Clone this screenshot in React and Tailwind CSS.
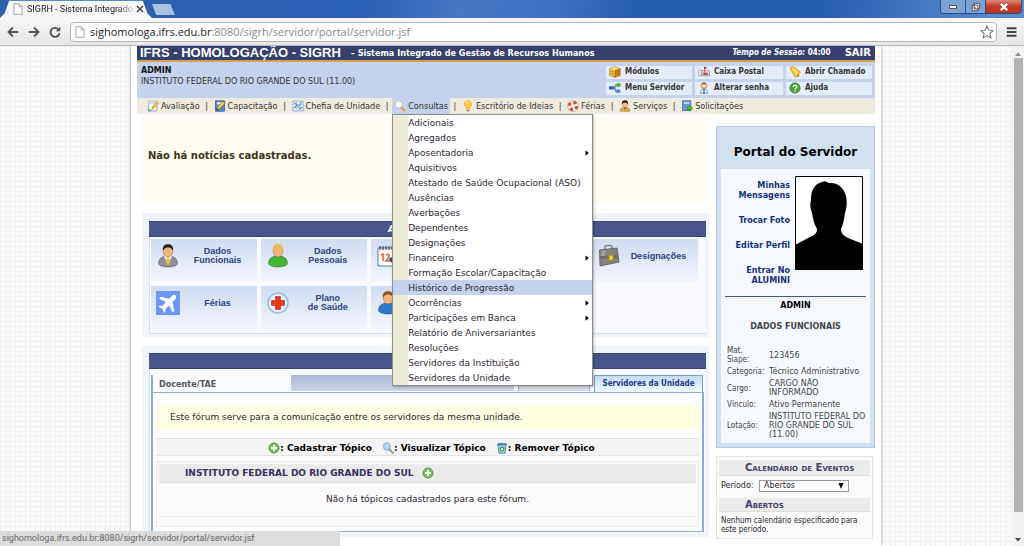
import React from "react";

const Svg = ({ className = "size-3 shrink-0", box = "0 0 16 16", children }) => (
  <svg className={className} viewBox={box} fill="none" aria-hidden="true">
    {children}
  </svg>
);

const NoteIcon = () => (
  <Svg>
    <path d="M2 1.500h11v13H2z" fill="#fff" stroke="#7d97b5" />
    <path d="M2 1.500h11v4H2z" fill="#cfe0f3" />
    <path d="M1.500 11l5 4h-5z" fill="#5b8fd0" />
    <path d="M6 13l1-4 6-7 2.500 2-6 7z" fill="#f3c24b" stroke="#b98a1f" strokeWidth=".7" />
  </Svg>
);
const BookPencilIcon = () => (
  <Svg>
    <path d="M2 1h12v14H2z" fill="#5c86c9" stroke="#2e5596" />
    <path d="M4 3h8v3H4z" fill="#dfe9f8" />
    <path d="M4 13l1-4 7-7 3 2-7 7z" fill="#f5cf4e" stroke="#8a6a16" strokeWidth=".8" />
    <path d="M3 14l1-3 2 2z" fill="#333" />
  </Svg>
);
const ChartIcon = () => (
  <Svg>
    <path d="M1 1.500h14v13H1z" fill="#e3f0f8" stroke="#7fa5c2" />
    <path d="M1 6h14M1 10h14M6 2v12M11 2v12" stroke="#a9c7dc" />
    <path d="M3 11l3-4 2 2 5-6M3 4l4 2M9 12l4-2" stroke="#3f7396" strokeWidth="1.300" />
  </Svg>
);
const SearchIcon = ({ blue }) => (
  <Svg>
    <circle cx="6.500" cy="6" r="4.800" fill={blue ? "#b5d2f3" : "#fff"} stroke={blue ? "#9cb6d8" : "#c3c3c3"} strokeWidth="1.500" />
    <path d="M10 10l4.500 4.500" stroke={blue ? "#999" : "#e39a2f"} strokeWidth="2.500" strokeLinecap="round" />
  </Svg>
);
const BulbIcon = () => (
  <Svg>
    <path d="M8 .8a4.800 4.800 0 0 0-3 8.600c.8.700 1 1.600 1 2.600h4c0-1 .2-1.900 1-2.600A4.800 4.800 0 0 0 8 .8z" fill="#ffc83d" stroke="#e89d1c" strokeWidth=".8" />
    <path d="M6 13h4v2H6z" fill="#7e8790" />
    <path d="M6 4l2-2" stroke="#fff4c2" strokeWidth="1.500" />
  </Svg>
);
const BuoyIcon = () => (
  <Svg>
    <circle cx="8" cy="8" r="5" stroke="#f4f0ee" strokeWidth="4" />
    <circle cx="8" cy="8" r="5" stroke="#d5492c" strokeWidth="4" strokeDasharray="4 3.850" />
    <circle cx="8" cy="8" r="7.200" stroke="#a86a5a" strokeWidth=".5" />
  </Svg>
);
const UserIcon = () => (
  <Svg>
    <path d="M1.500 15c0-4 2.500-5.500 6.500-5.500s6.500 1.500 6.500 5.500z" fill="#e2b23a" stroke="#0006" strokeWidth=".8" />
    <path d="M6 10l2 3 2-3z" fill="#c5332a" />
    <circle cx="8" cy="5.500" r="3.700" fill="#f6c58f" stroke="#a66c33" strokeWidth=".4" />
    <path d="M3.800 6C3.300 2 5.500.3 8 .3s4.700 1.700 4.200 5.700C11 4 9.500 3.800 8 3.800S5 4 3.800 6z" fill="#2c1a10" />
  </Svg>
);
const SolicitIcon = () => (
  <Svg>
    <path d="M2 1h11v13H2z" fill="#6f9bd3" stroke="#315e9e" />
    <path d="M4 3h7v2H4z" fill="#d6e5f7" />
    <path d="M8 9h4V7l4 4-4 4v-2H8z" fill="#4db43c" stroke="#237a17" strokeWidth=".6" />
  </Svg>
);
const CubeIcon = () => (
  <Svg>
    <path d="M1 3.500L8 1l7 2.500v9L8 15l-7-2.500z" fill="#c9871f" stroke="#8f5a10" strokeWidth=".8" />
    <path d="M1 3.500L8 6v9l-7-2.500z" fill="#f2bf3c" />
    <path d="M1 3.500L8 1l7 2.500L8 6z" fill="#f9dd7d" />
    <path d="M8 6l7-2.500M3 7l3 1M3 10l3 1M10 8l3-1M10 11l3-1M8 6v9" stroke="#8f5a10" strokeWidth=".8" />
  </Svg>
);
const TreeIcon = () => (
  <Svg>
    <path d="M5 8h4M8 4v8M8 4h3M8 12h3" stroke="#555" />
    <rect x="0" y="5.500" width="7" height="4.500" rx="1" fill="#2f68c5" />
    <ellipse cx="12.500" cy="4" rx="3.500" ry="2.800" fill="#4fb845" />
    <ellipse cx="12" cy="12" rx="3.500" ry="2.500" fill="#4a86dc" />
  </Svg>
);
const MailboxIcon = () => (
  <Svg>
    <path d="M1 7c0-3 4-3 4 0v6H1z" fill="#eee" stroke="#777" strokeWidth=".8" />
    <path d="M5 6h8c2 0 2.500 1 2.500 3v4H5z" fill="#d8d8dd" stroke="#777" strokeWidth=".8" />
    <path d="M8 1h3v3h-2v5H8z" fill="#d2342b" />
    <path d="M7 9h6v3H7z" fill="#c3483d" />
  </Svg>
);
const PersonKeyIcon = () => (
  <Svg>
    <circle cx="8" cy="5" r="3.800" fill="#fbd9a8" stroke="#b56a2a" />
    <path d="M4.500 3c1-3 6-3 7 0z" fill="#b5531b" />
    <path d="M3.500 15c0-3.500 1.500-5.500 4.500-5.500s4.500 2 4.500 5.500z" fill="#fff" stroke="#4169ad" />
    <path d="M8 10v5" stroke="#3765b5" strokeWidth="2" />
  </Svg>
);
const BellIcon = () => (
  <Svg>
    <path d="M2 2l3-1c5 1 6 5 9 6l1 2-6 6-2-1C7 9 2 8 2 2z" fill="#f8cb37" stroke="#b7820c" strokeWidth=".8" />
    <path d="M5 4c3 1 4 4 6 6" stroke="#fff1a6" strokeWidth="1.500" />
    <circle cx="12" cy="13" r="1.500" fill="#bd8415" />
  </Svg>
);
const HelpIcon = () => (
  <Svg>
    <circle cx="8" cy="8" r="6.800" fill="#44a838" stroke="#2a7a22" />
    <path d="M5.800 6.500c0-3 4.600-3 4.600-.3C10.400 8 8 8 8 10" stroke="#fff" strokeWidth="1.700" />
    <circle cx="8" cy="12" r="1.100" fill="#fff" />
  </Svg>
);
const AddIcon = () => (
  <Svg>
    <circle cx="8" cy="8" r="6.800" fill="#79bd5d" stroke="#4c8e35" />
    <path d="M8 4v8M4 8h8" stroke="#fff" strokeWidth="2.400" />
  </Svg>
);
const BinIcon = () => (
  <Svg>
    <path d="M2.500 3h11L12 15H4z" fill="#a8cdec" stroke="#4378ad" />
    <path d="M1 3l3-2 11 1-1 2.500H2z" fill="#4f83c0" />
    <circle cx="8" cy="9.500" r="2.500" fill="#eaf7e6" stroke="#35a02b" strokeWidth="1.600" />
  </Svg>
);
const PageIcon = () => (
  <Svg>
    <path d="M2.500 1h7l4 4v10h-11z" fill="#fff" stroke="#8a8a8a" />
    <path d="M9.500 1v4h4" stroke="#8a8a8a" />
  </Svg>
);

const BigUser = ({ hair, body, tie }) => (
  <Svg className="size-6 shrink-0" box="0 0 24 24">
    <path d="M2.500 20c0-5.500 3-8 9.500-8s9.500 2.500 9.500 8c-2 4-17 4-19 0z" fill={body} stroke="#0006" strokeWidth=".7" />
    {tie && <path d="M8 12l4 8 4-8z" fill="#fff" />}
    {tie && <path d="M11 13h2l1 5-2 4-2-4z" fill="#e0c23a" />}
    <ellipse cx="12" cy="7" rx="4.800" ry="6" fill="#f0b87c" stroke="#9b6430" strokeWidth=".5" />
    <path d="M7 7C6 2 9 .3 12 .3S18 2 17 7c-1-3-3-3.500-5-3.500S8 4 7 7z" fill={hair} />
  </Svg>
);
const PlaneIcon = () => (
  <Svg className="size-6 shrink-0" box="0 0 24 24">
    <path d="M0 0h24v24H0z" fill="#6a97f3" />
    <path d="M19.500 4.200c-1-.8-2.500-.2-3.500.8l-2.800 2.800-8.500-2L3 7.500l7 3.600-3.600 3.800-2.600-.4L2.500 16l4 1.700L8.200 22l1.400-1.400-.3-2.700 3.800-3.500 3.500 7 1.800-1.700-2-8.500L19 8.400c1-1 1.500-3.200.5-4.200z" fill="#fff" />
  </Svg>
);
const CrossIcon = () => (
  <Svg className="size-6 shrink-0" box="0 0 24 24">
    <circle cx="12" cy="12" r="10" fill="#e4f1fb" stroke="#8bbde6" strokeWidth="1.500" />
    <path d="M9.500 5.500h5v4h4v5h-4v4h-5v-4h-4v-5h4z" fill="#e8381b" stroke="#b52611" strokeWidth=".6" />
  </Svg>
);
const CalendarIcon = () => (
  <Svg className="size-6 shrink-0" box="0 0 24 24">
    <path d="M2 4h20v18H2z" fill="#fff" stroke="#5775b0" />
    <path d="M4 2v4M7 2v4M10 2v4M13 2v4M16 2v4M19 2v4" stroke="#444" strokeWidth="1.200" />
    <path d="M5 11l2-1v7M10 11c3-2 4 1 2 3l-2 3h5" stroke="#e0662b" strokeWidth="1.600" />
    <path d="M14 14l6 8" stroke="#27478f" strokeWidth="3" />
  </Svg>
);
const CaseIcon = () => (
  <Svg className="size-6 shrink-0" box="0 0 24 24">
    <path d="M8 5V2.500c0-1 7-2 7 0V5" stroke="#777" strokeWidth="1.300" />
    <path d="M2.500 6L20 4l2 14-19 4z" fill="#85827f" stroke="#5b5855" strokeWidth=".8" />
    <path d="M2.500 12L21 11v3L3 15z" fill="#716d6a" />
    <path d="M4 7l5-.7L8 12H4z" fill="#a19e9b" />
    <path d="M12 11.500h4v4.500h-4z" fill="#f4d622" stroke="#b89a10" strokeWidth=".6" />
  </Svg>
);

const NAV = [
  ["Avaliação", NoteIcon],
  ["Capacitação", BookPencilIcon],
  ["Chefia de Unidade", ChartIcon],
  ["Consultas", SearchIcon],
  ["Escritório de Ideias", BulbIcon],
  ["Férias", BuoyIcon],
  ["Serviços", UserIcon],
  ["Solicitações", SolicitIcon],
];
const MENU = [
  "Adicionais", "Agregados", "Aposentadoria", "Aquisitivos", "Atestado de Saúde Ocupacional (ASO)",
  "Ausências", "Averbações", "Dependentes", "Designações", "Financeiro", "Formação Escolar/Capacitação",
  "Histórico de Progressão", "Ocorrências", "Participações em Banca", "Relatório de Aniversariantes",
  "Resoluções", "Servidores da Instituição", "Servidores da Unidade",
];
const SUBMENUS = ["Aposentadoria", "Financeiro", "Ocorrências", "Participações em Banca"];
const SHORTCUTS = [
  ["Módulos", CubeIcon],
  ["Caixa Postal", MailboxIcon],
  ["Abrir Chamado", BellIcon],
  ["Menu Servidor", TreeIcon],
  ["Alterar senha", PersonKeyIcon],
  ["Ajuda", HelpIcon],
];
const TILES = [
  [["Dados", "Funcionais"], <BigUser hair="#262626" body="#8d8f92" tie />],
  [["Dados", "Pessoais"], <BigUser hair="#e5b843" body="#43b535" />],
  [[], <CalendarIcon />],
  [[], null],
  [["Designações"], <CaseIcon />],
  [["Férias"], <PlaneIcon />],
  [["Plano", "de Saúde"], <CrossIcon />],
  [[], <BigUser hair="#8c5420" body="#2b78c9" />],
];
const DATA = [
  [<>Mat.<br />Siape:</>, "123456"],
  ["Categoria:", "Técnico Administrativo"],
  ["Cargo:", "CARGO NÃO INFORMADO"],
  ["Vínculo:", "Ativo Permanente"],
  ["Lotação:", "INSTITUTO FEDERAL DO RIO GRANDE DO SUL (11.00)"],
];

function Browser() {
  return (
    <header className="shrink-0 font-['Open_Sans',sans-serif]">
      <div className="flex h-[18px] items-start justify-between bg-[linear-gradient(100deg,#2e62ad_0%,#2a60b0_35%,#4677c2_45%,#3c70bf_55%,#265dab_62%,#265dab_80%,#4a7fc4_92%,#5d8ccb_100%)]">
        <div className="flex h-full items-start">
          <div className="flex h-full w-[152px] items-center gap-[3px] bg-[#f5f6f7] pl-3 pr-2.5 font-['Roboto',sans-serif] text-[9px] text-[#222] [clip-path:polygon(0_100%,3%_75%,6%_4%,94%_4%,97%_75%,100%_100%)]">
            <PageIcon />
            <span className="flex-1 whitespace-nowrap [mask-image:linear-gradient(90deg,#000_85%,#0003)]">SIGRH - Sistema Integrado</span>
            <button aria-label="Fechar aba">
              <Svg className="size-2"><path d="M2 2l12 12M14 2L2 14" stroke="#444" strokeWidth="3" /></Svg>
            </button>
          </div>
          <button aria-label="Nova aba" className="mt-1 h-[11px] w-[23px] bg-[#a6c2e4] [clip-path:polygon(0_0,80%_0,100%_100%,18%_100%)]" />
        </div>
        <div className="mr-0.5 flex h-3.5 overflow-hidden rounded-b border border-t-0 border-[#294c82]">
          <button aria-label="Minimizar" className="flex w-[25px] items-end justify-center border-r border-[#294c82] bg-[#7da3d6] pb-1">
            <span className="h-1 w-2 border border-[#555] bg-white" />
          </button>
          <button aria-label="Restaurar" className="flex w-5 items-center justify-center border-r border-[#294c82] bg-[#7da3d6]">
            <Svg className="size-2.5"><path d="M5 2h9v9H5zM2 5h9v9H2z" fill="#fff" stroke="#444" strokeWidth="1.500" /><path d="M5.500 8.500h2v2h-2z" fill="#444" /></Svg>
          </button>
          <button aria-label="Fechar" className="flex w-[35px] items-center justify-center bg-[linear-gradient(#df8a79,#c33a26_50%,#bb3420)]">
            <Svg className="size-2.5"><path d="M3 3l10 10M13 3L3 13" stroke="#fff" strokeWidth="3.500" /></Svg>
          </button>
        </div>
      </div>
      <div className="flex h-7 items-center gap-[9px] border-b border-[#b9b9b9] bg-[linear-gradient(#f7f7f8,#e6e6e7)] pr-1.5 pl-[7px]">
        <button aria-label="Voltar"><Svg className="size-3"><path d="M15 8H2M8 2L2 8l6 6" stroke="#555" strokeWidth="2.500" /></Svg></button>
        <button aria-label="Avançar"><Svg className="size-3"><path d="M1 8h13M8 2l6 6-6 6" stroke="#555" strokeWidth="2.500" /></Svg></button>
        <button aria-label="Recarregar"><Svg className="size-3"><path d="M13 5A6 6 0 1 0 14 9.500" stroke="#555" strokeWidth="2.500" /><path d="M15 1v6H9z" fill="#555" /></Svg></button>
        <div className="flex h-5 flex-1 items-center gap-1 rounded-sm border border-[#b4b4b4] bg-white pr-0.5 pl-[3px]">
          <PageIcon />
          <a href="#endereco" className="flex-1 text-[11px] text-[#8a8a8a]"><span className="text-[#222]">sighomologa.ifrs.edu.br</span>:8080/sigrh/servidor/portal/servidor.jsf</a>
          <button aria-label="Favorito"><Svg className="size-3.5"><path d="M8 1.200l2 4.800 5 .4-3.800 3.300 1.200 5L8 12l-4.400 2.700 1.200-5L1 6.400 6 6z" stroke="#777" strokeWidth="1.200" /></Svg></button>
        </div>
        <button aria-label="Menu"><Svg className="size-3"><path d="M1 3h13M1 8h13M1 13h13" stroke="#444" strokeWidth="2.600" /></Svg></button>
      </div>
    </header>
  );
}

function ConsultasMenu() {
  return (
    <ul className="absolute top-full left-0 z-20 w-[201px] border border-[#8d8f85] bg-[linear-gradient(90deg,#ecebd8_15px,#fff_15px)] font-['DejaVu_Sans',sans-serif] text-[#2b2530] shadow-[1px_1px_2px_#0004]">
      {MENU.map((m) => (
        <li key={m}>
          <a href="#consultas" className={`flex h-[15px] items-center justify-between pl-[15px] pr-0.5 whitespace-nowrap ${m === "Histórico de Progressão" ? "bg-[#c4d2eb]" : ""}`}>
            {m}
            {SUBMENUS.includes(m) && <Svg className="size-1.5"><path d="M4 1l9 7-9 7z" fill="#000" /></Svg>}
          </a>
        </li>
      ))}
    </ul>
  );
}

function TopArea() {
  return (
    <div className="mx-[6px] font-['DejaVu_Sans_Condensed','DejaVu_Sans',sans-serif]">
      <div className="flex h-4 items-center border-b-2 border-[#d9a04a] bg-[#373f6e] pl-[3px] pr-1 text-white">
        <h1 className="font-['Liberation_Sans',sans-serif] text-[13px] font-bold whitespace-nowrap">IFRS - HOMOLOGAÇÃO - SIGRH</h1>
        <span className="ml-2.5 flex-1 text-[9px] font-bold whitespace-nowrap">– Sistema Integrado de Gestão de Recursos Humanos</span>
        <span className="mr-3.5 text-[8px] font-bold whitespace-nowrap"><i>Tempo de Sessão:</i> 04:00</span>
        <a href="#sair" className="font-['DejaVu_Sans',sans-serif] text-[10px] font-bold">SAIR</a>
      </div>
      <div className="flex h-9 justify-between bg-[#c4d2eb] pl-1 pr-[3px]">
        <div className="pt-[3px] font-['DejaVu_Sans',sans-serif] text-[8px] leading-[11px] text-[#333]">
          <p className="font-bold text-[#111]">ADMIN</p>
          <p>INSTITUTO FEDERAL DO RIO GRANDE DO SUL (11.00)</p>
        </div>
        <div className="grid grid-cols-[86px_88px_86px] content-center gap-x-[3px] gap-y-[3px]">
          {SHORTCUTS.map(([t, I]) => (
            <a key={t} href="#atalho" className="flex h-[13px] items-center gap-1 bg-[#e5ebf7] pl-[3px] text-[8px] font-bold whitespace-nowrap text-[#333]"><I />{t}</a>
          ))}
        </div>
      </div>
      <nav className="flex h-4 items-stretch bg-[#efebde] pl-2 whitespace-nowrap text-[#333]">
        {NAV.map(([t, I], i) => (
          <div key={t} className="flex items-center">
            {i > 0 && <span className="w-2.5 text-center">|</span>}
            <div className={`relative flex h-full items-center ${t === "Consultas" ? "bg-[#c4d2eb]" : ""}`}>
              <a href="#menu" className="flex items-center gap-0.5 px-0.5"><I />{t}</a>
              {t === "Consultas" && <ConsultasMenu />}
            </div>
          </div>
        ))}
      </nav>
    </div>
  );
}

const barClass = "h-4 border-y border-[#39447a] bg-[#47558a] text-[9px] leading-[14px] font-bold text-white italic";

function Modules() {
  return (
    <section className="bg-[#eff3fa] px-[3px] pt-2 pb-[3px] pl-[7px]">
      <h2 className={`${barClass} pl-[239px]`}>A</h2>
      <div className="grid grid-cols-5 gap-1 border-b border-l border-[#d3deef] bg-[#f8faff] pt-0.5 pr-2 pb-1 pl-px">
        {TILES.map(([lines, icon], i) => (
          <a key={i} href="#modulo" aria-label={lines.join(" ") || "Módulo"} className="flex h-[43px] items-start bg-[linear-gradient(#cfdbf0,#f3f6fd)] pt-[5px] pl-[5px] font-['Liberation_Sans',sans-serif] text-[9px] leading-[9px] font-bold text-[#2b4384]">
            {icon}
            <span className="flex h-6 flex-1 flex-col justify-center pr-2 pl-1.5 text-center">
              {lines.map((l) => <span key={l}>{l}</span>)}
            </span>
          </a>
        ))}
      </div>
    </section>
  );
}

function Forum() {
  return (
    <section className="bg-[#eff3fa] pt-[7px] pr-[3px] pb-1 pl-[7px]">
      <div className={barClass} />
      <div className="border-l border-[#d3deef] bg-[#f8fbff] pt-1.5 pr-0.5 pb-px pl-px">
        <div className="flex h-[17px] items-stretch font-['DejaVu_Sans_Condensed','DejaVu_Sans',sans-serif] text-[9px] font-bold">
          <button className="w-[140px] border-l-2 border-[#8fa9d3] pl-1.5 text-left text-[#555]">Docente/TAE</button>
          <span className="mb-px flex-1 bg-[linear-gradient(#a9b8d6,#cdd4e2)]" />
          <button className="mb-px ml-1 w-[72px] border-x border-[#8fa9d3] bg-[#d5dbe5] text-[#777]">Servidores</button>
          <button className="mr-px ml-1 w-[109px] border border-b-0 border-[#7f9fd0] bg-[linear-gradient(#c2dcf8,#f6faff)] text-[8px] whitespace-nowrap text-[#1c3a84]">Servidores da Unidade</button>
        </div>
        <div className="border-2 border-y border-[#8fa9d3] bg-white px-[3px] pt-3 pb-1">
          <p className="bg-[#ffffe3] py-[5px] pl-3.5 leading-[14px] text-[#2b2530]">Este fórum serve para a comunicação entre os servidores da mesma unidade.</p>
          <div className="mt-[9px] flex h-[18px] items-center justify-center gap-2.5 border-y border-[#e3e3e3] bg-[#f4f4f4] pt-0.5 pl-2 font-bold text-black">
            <a href="#cadastrar" className="flex items-center"><AddIcon />: Cadastrar Tópico</a>
            <a href="#visualizar" className="flex items-center"><SearchIcon blue />: Visualizar Tópico</a>
            <a href="#remover" className="flex items-center"><BinIcon />: Remover Tópico</a>
          </div>
          <div className="mt-[5px] border border-[#e6e8ec] bg-[#fbfbfb] p-0.5">
            <h3 className="flex h-[19px] items-center gap-2 border-b border-[#dedede] bg-[#ebebeb] pl-[26px] text-[9px] font-bold text-[#37305c]">INSTITUTO FEDERAL DO RIO GRANDE DO SUL <AddIcon /></h3>
            <p className="pt-[9px] pb-2.5 text-center leading-[14px] text-[#2b2530]">Não há tópicos cadastrados para este fórum.</p>
            <div className="h-2 border-t border-[#eee]" />
          </div>
        </div>
      </div>
    </section>
  );
}

function Sidebar() {
  return (
    <aside className="w-[159px] shrink-0 pt-3">
      <section className="border border-[#b3c8e5] bg-[#d3e0f0] px-1 pb-1">
        <h2 className="pt-3.5 pb-1.5 text-center text-[12px] leading-[22px] font-bold whitespace-nowrap text-black">Portal do Servidor</h2>
        <div className="bg-[#f5f8ff] px-1 pt-[7px] pb-0.5">
          <div className="flex justify-end gap-[5px] pr-[3px]">
            <div className="flex flex-col gap-[15px] pt-1 text-right font-['DejaVu_Sans_Condensed','DejaVu_Sans',sans-serif] text-[9px] leading-[10px] font-bold whitespace-nowrap text-[#17307d]">
              <a href="#mensagens">Minhas<br />Mensagens</a>
              <a href="#foto">Trocar Foto</a>
              <a href="#perfil">Editar Perfil</a>
              <a href="#alumini">Entrar No<br />ALUMINI</a>
            </div>
            <svg viewBox="0 0 68 94" className="h-[94px] w-[68px]" role="img" aria-label="Foto">
              <path d="M.5.500h67v93H.500z" fill="#fff" stroke="#000" />
              <path d="M0 94V69l15-8c5-2 7-4 7-8-3-5-4-10-5-16-2-5-2-9-1-13 0-11 4-16 11-18 3-2 5 0 7 1 9-1 15 5 17 13 1 5 1 11-1 17-1 7-2 12-4 16 0 4 2 6 7 9l15 6v26z" fill="#000" />
            </svg>
          </div>
          <div className="mt-[11px] border-t border-[#47558a] pt-1 text-center text-[8px] leading-[10px] font-bold">
            <p className="text-black">ADMIN</p>
            <h3 className="mt-[11px] text-[#444]">DADOS FUNCIONAIS</h3>
          </div>
          <table className="mt-[13px] w-full table-fixed text-[8px] leading-[9px] text-[#444]">
            <tbody>
              {DATA.map(([k, v]) => (
                <tr key={v}>
                  <th className="w-11 pt-px pb-0.5 pl-0.5 text-left align-middle font-['DejaVu_Sans_Condensed','DejaVu_Sans',sans-serif] font-normal">{k}</th>
                  <td className="pt-px pb-0.5 align-middle">{v}</td>
                </tr>
              ))}
            </tbody>
          </table>
        </div>
      </section>
      <section className="mt-2 mr-0.5 border border-[#e2e2e2] bg-[#fbfbfb] px-0.5 pt-[3px] pb-1 text-[8px] text-[#2b2530]">
        <h3 className="border-b border-[#dcdcdc] bg-[#ebebeb] pl-[26px] text-[10px] leading-[15px] font-bold whitespace-nowrap text-[#454265] [font-variant:small-caps]">Calendário de Eventos</h3>
        <div className="flex items-center py-1 pl-0.5">
          <label htmlFor="periodo" className="w-[38px]">Período:</label>
          <div className="relative">
            <select id="periodo" className="block h-3 w-[90px] appearance-none border border-[#9a9a9a] bg-white pl-1 text-[8px] leading-[10px]">
              <option>Abertos</option>
            </select>
            <Svg className="pointer-events-none absolute top-0.5 right-1 size-2"><path d="M3 2h10L8 14z" fill="#000" /></Svg>
          </div>
        </div>
        <h3 className="mt-0.5 border-b border-[#dcdcdc] bg-[#ebebeb] pl-[26px] text-[10px] leading-[13px] font-bold text-[#454265] [font-variant:small-caps]">Abertos</h3>
        <p className="pt-1 pl-0.5 font-['DejaVu_Sans_Condensed','DejaVu_Sans',sans-serif] leading-[9px]">Nenhum calendário especificado para este período.</p>
      </section>
    </aside>
  );
}

export default function App() {
  return (
    <div className="relative flex h-screen flex-col overflow-hidden bg-white font-['DejaVu_Sans',sans-serif] text-[9px] leading-3">
      <Browser />
      <div className="flex min-h-0 flex-1">
        <div className="flex min-w-0 flex-1 justify-center overflow-hidden bg-[#fcfcfc] bg-[linear-gradient(#f0f0f0_1px,transparent_1px),linear-gradient(90deg,#f0f0f0_1px,transparent_1px)] bg-[size:5px_5px]">
          <div className="w-[750px] max-w-full bg-white shadow-[0_0_3px_#0007]">
            <TopArea />
            <div className="flex gap-[7px] pr-[6px] pl-[11px]">
              <main className="flex min-w-0 flex-1 flex-col gap-[9px] pt-1">
                <section className="h-[86px] bg-[#fffdf3] px-1.5 pt-8 text-[10px] font-bold text-[#3a3416]">Não há notícias cadastradas.</section>
                <Modules />
                <Forum />
              </main>
              <Sidebar />
            </div>
          </div>
        </div>
        <div className="flex w-3 shrink-0 flex-col items-center bg-[#f1f1f1] pt-1">
          <Svg className="size-2"><path d="M2 12l6-7 6 7z" fill="#8a8a8a" /></Svg>
          <span className="mb-6 w-[9px] flex-1 bg-[#b4b4b4]" />
          <Svg className="mb-0.5 size-2"><path d="M2 4l6 7 6-7z" fill="#444" /></Svg>
        </div>
      </div>
      <div className="absolute bottom-0 left-0 z-30 h-[15px] w-[340px] bg-[#dcdcdc] pl-0.5 font-['Roboto',sans-serif] text-[9px] leading-[14px] whitespace-nowrap text-[#666]">sighomologa.ifrs.edu.br:8080/sigrh/servidor/portal/servidor.jsf</div>
    </div>
  );
}
